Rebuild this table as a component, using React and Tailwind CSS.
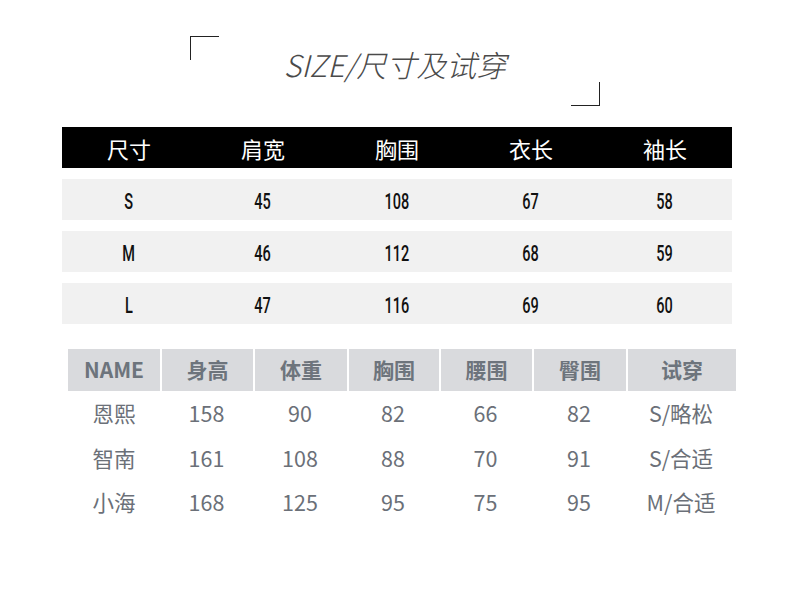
import React from "react";

const top = [
  ["S", "45", "108", "67", "58"],
  ["M", "46", "112", "68", "59"],
  ["L", "47", "116", "69", "60"],
];
const heads = ["尺寸", "肩宽", "胸围", "衣长", "袖长"];
const heads2 = ["NAME", "身高", "体重", "胸围", "腰围", "臀围", "试穿"];
const rows2 = [
  ["恩熙", "158", "90", "82", "66", "82", "S/略松"],
  ["智南", "161", "108", "88", "70", "91", "S/合适"],
  ["小海", "168", "125", "95", "75", "95", "M/合适"],
];

export default function App() {
  return (
    <div
      className="w-[790px] h-[595px] bg-white overflow-hidden"
      style={{ fontFamily: '"Noto Sans CJK SC", "Noto Sans", sans-serif' }}
    >
      <div className="pt-[36px] pl-[190px]">
        <div className="relative w-[410px] h-[70px] flex items-center justify-center">
          <div className="absolute left-0 top-0 w-[29px] h-[24px] border-l border-t border-[#222]" />
          <div className="absolute right-0 bottom-0 w-[29px] h-[24px] border-r border-b border-[#222]" />
          <div className="text-[30px] font-light italic text-[#4a4a4a] leading-none pb-[15px]">
            SIZE/尺寸及试穿
          </div>
        </div>
      </div>

      <div className="ml-[62px] mt-[21px] w-[670px] flex flex-col gap-[11px]">
        <div className="grid grid-cols-5 h-[41px] bg-black text-white text-[22px] items-center text-center pt-[2px]">
          {heads.map((h) => (
            <div key={h}>{h}</div>
          ))}
        </div>
        {top.map((r) => (
          <div
            key={r[0]}
            className="grid grid-cols-5 h-[41px] bg-[#f1f1f1] text-[#111] text-[22px] items-center text-center pt-[4px]"
            style={{ fontFamily: 'Roboto, "Liberation Sans", sans-serif' }}
          >
            {r.map((c, i) => (
              <div key={i}>
                <span className="inline-block font-medium scale-x-[0.66]">{c}</span>
              </div>
            ))}
          </div>
        ))}
      </div>

      <div className="ml-[68px] mt-[25px] w-[668px]">
        <div className="grid grid-cols-[92px_93px_94px_92px_93px_94px_110px] h-[42px] bg-[#d9dadd] text-[#6d747c] text-[21px] font-bold items-stretch text-center">
          {heads2.map((h, i) => (
            <div
              key={h}
              className={
                "flex items-center justify-center " + (i > 0 ? "border-l-2 border-white" : "")
              }
            >
              {h}
            </div>
          ))}
        </div>
        {rows2.map((r) => (
          <div
            key={r[0]}
            className="grid grid-cols-[92px_93px_94px_92px_93px_94px_110px] h-[44.5px] text-[#6b7078] text-[21.5px] items-center text-center"
          >
            {r.map((c, i) => (
              <div key={i}>{c}</div>
            ))}
          </div>
        ))}
      </div>
    </div>
  );
}
